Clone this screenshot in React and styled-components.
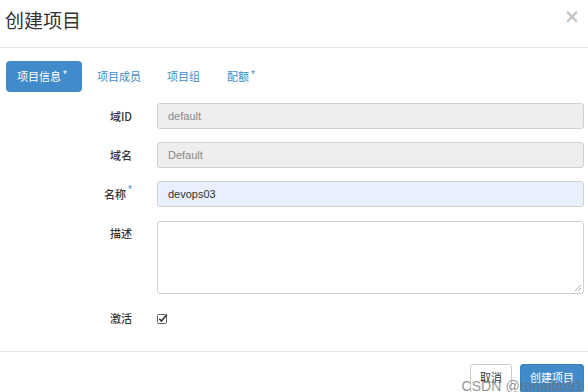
import React from "react";
import styled, { createGlobalStyle } from "styled-components";

const Global = createGlobalStyle`
  html, body { margin: 0; padding: 0; background: #fff; }
  body { width: 588px; height: 392px; overflow: hidden; font-family: "Liberation Sans", Arial, "Noto Sans CJK SC", sans-serif; color: #333; }
  * { box-sizing: border-box; }
`;

const Modal = styled.div`
  position: relative;
  width: 588px;
  height: 392px;
  display: flex;
  flex-direction: column;
  overflow: hidden;
  & > * { flex-shrink: 0; }
`;

const Header = styled.div`
  height: 48px;
  border-bottom: 1px solid #e5e5e5;
  display: flex;
  justify-content: space-between;
  align-items: flex-start;
  padding: 8px 5px 0 5px;
`;

const Title = styled.h4`
  margin: 0;
  font-size: 19px;
  line-height: 24px;
  font-weight: normal;
  color: #333;
  font-family: "Noto Sans CJK SC", sans-serif;
`;

const Close = styled.span`
  font-size: 19px;
  line-height: 16px;
  font-weight: bold;
  color: #c4c4c4;
  margin-right: 3px;
  font-family: "DejaVu Sans", sans-serif;
`;

const Body = styled.div`
  padding: 13px 4px 0 6px;
`;

const Tabs = styled.div`
  display: flex;
  align-items: center;
  height: 31px;
  margin-bottom: 11px;
`;

const Tab = styled.div`
  height: 31px;
  display: flex;
  align-items: center;
  padding: 0 0 1px 0;
  margin-right: ${(p) => p.$mr || 0}px;
  border-radius: 4px;
  background: ${(p) => (p.$active ? "#428bca" : "transparent")};
  color: ${(p) => (p.$active ? "#fff" : "#428bca")};
  font-size: 11px;
  font-family: "Noto Sans CJK SC", sans-serif;
  padding-left: ${(p) => (p.$active ? "11px" : "0")};
  width: ${(p) => p.$w || "auto"};
`;

const Star = styled.sup`
  font-size: 10px;
  line-height: 0;
  margin-left: 2px;
  color: ${(p) => (p.$light ? "#fff" : "#428bca")};
  position: relative;
  top: -1px;
  font-family: "Liberation Sans", Arial, sans-serif;
`;

const Form = styled.div`
  display: grid;
  grid-template-columns: 126px 1fr;
  column-gap: 25px;
  row-gap: 13px;
`;

const Label = styled.label`
  text-align: right;
  font-size: 11px;
  font-weight: 500;
  line-height: ${(p) => p.$lh || 26}px;
  color: #333;
  font-family: "Noto Sans CJK SC", sans-serif;
  align-self: start;
`;

const Input = styled.div`
  height: 26px;
  border: 1px solid #d0d0d0;
  border-radius: 3px;
  background: ${(p) => (p.$disabled ? "#eeeeee" : p.$filled ? "#e8f0fe" : "#fff")};
  color: ${(p) => (p.$disabled ? "#888" : "#333")};
  font-size: 11px;
  line-height: 24px;
  padding: 0 10px;
  font-family: "Liberation Sans", Arial, sans-serif;
`;

const TextArea = styled.div`
  position: relative;
  height: 73px;
  margin-top: 1px;
  border: 1px solid #d0d0d0;
  border-radius: 3px;
  background: #fff;
`;

const Grip = styled.svg`
  position: absolute;
  right: 1px;
  bottom: 1px;
`;

const CheckWrap = styled.div`
  height: 23px;
  display: flex;
  align-items: center;
`;

const Footer = styled.div`
  margin-top: 21px;
  border-top: 1px solid #e5e5e5;
  padding: 12px 4px 0 0;
  display: flex;
  justify-content: flex-end;
  gap: 8px;
`;

const Button = styled.div`
  height: 29px;
  padding: 0 9px;
  border-radius: 3px;
  border: 1px solid ${(p) => (p.$primary ? "#3a80bc" : "#ccc")};
  background: ${(p) => (p.$primary ? "#428bca" : "#fff")};
  color: ${(p) => (p.$primary ? "#fff" : "#333")};
  font-size: 11px;
  line-height: 25px;
  font-family: "Noto Sans CJK SC", sans-serif;
`;

const Watermark = styled.div`
  position: absolute;
  right: 5px;
  bottom: -2px;
  font-size: 14px;
  color: rgba(110, 110, 110, 0.75);
  font-family: "Liberation Sans", Arial, sans-serif;
  letter-spacing: 0.1px;
  pointer-events: none;
`;

export default function App() {
  return (
    <>
      <Global />
      <Modal>
        <Header>
          <Title>创建项目</Title>
          <Close>×</Close>
        </Header>
        <Body>
          <Tabs>
            <Tab $active $w="76px" $mr={15}>项目信息<Star $light>*</Star></Tab>
            <Tab $mr={26}>项目成员</Tab>
            <Tab $mr={27}>项目组</Tab>
            <Tab>配额<Star>*</Star></Tab>
          </Tabs>
          <Form>
            <Label>域ID</Label>
            <Input $disabled>default</Input>
            <Label>域名</Label>
            <Input $disabled>Default</Input>
            <Label>名称<Star>*</Star></Label>
            <Input $filled>devops03</Input>
            <Label>描述</Label>
            <TextArea>
              <Grip width="9" height="9" viewBox="0 0 9 9">
                <path d="M8 2 L2 8 M8 5 L5 8" stroke="#aaa" strokeWidth="1" />
              </Grip>
            </TextArea>
            <Label $lh={23}>激活</Label>
            <CheckWrap>
              <svg width="11" height="11" viewBox="0 0 11 11">
                <rect x="0.5" y="1.5" width="9" height="9" rx="1" fill="#fff" stroke="#666" />
                <path d="M2.3 5.8 L4.4 8 L9.8 1.8" stroke="#333" strokeWidth="1.6" fill="none" />
              </svg>
            </CheckWrap>
          </Form>
        </Body>
        <Footer>
          <Button>取消</Button>
          <Button $primary>创建项目</Button>
        </Footer>
        <Watermark>CSDN @ronaldo91</Watermark>
      </Modal>
    </>
  );
}
